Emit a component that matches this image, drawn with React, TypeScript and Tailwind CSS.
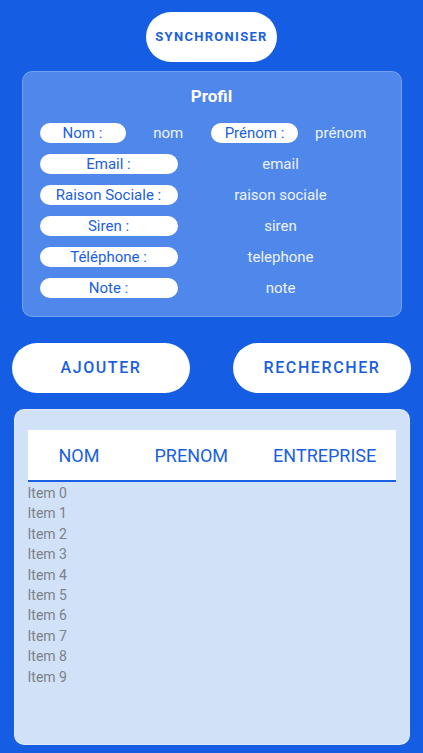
import React from "react";

const Pill = ({ label, w }: { label: string; w: string }) => (
  <div
    className={`${w} h-[20px] shrink-0 rounded-full bg-white flex items-center justify-center text-[15px] text-[#1a5fe0]`}
  >
    {label}
  </div>
);

const Value = ({ text }: { text: string }) => (
  <div className="flex-1 text-center text-[15px] text-white/90">{text}</div>
);

const rows = [
  { label: "Email :", value: "email" },
  { label: "Raison Sociale :", value: "raison sociale" },
  { label: "Siren :", value: "siren" },
  { label: "Téléphone :", value: "telephone" },
  { label: "Note :", value: "note" },
];

export default function App() {
  const items = Array.from({ length: 10 }, (_, i) => `Item ${i}`);

  return (
    <div
      className="w-[423px] h-[753px] bg-[#155de2] flex flex-col items-center pt-3 overflow-hidden"
      style={{ fontFamily: "Roboto, 'Noto Sans', sans-serif" }}
    >
      <button className="w-[131px] h-[50px] rounded-full bg-white text-[13px] font-bold tracking-[0.1em] text-[#1a5fe0]">
        SYNCHRONISER
      </button>

      {/* profil */}
      <div className="mt-[9px] w-[380px] h-[246px] rounded-[10px] bg-[#4f87ea] border border-white/20 px-[17px] pt-[12px]">
        <div className="text-center text-[17px] leading-[24px] font-bold text-white">Profil</div>
        <div className="mt-[15px] flex flex-col gap-[11px]">
          <div className="flex items-center h-[20px]">
            <Pill label="Nom :" w="w-[86px]" />
            <Value text="nom" />
            <Pill label="Prénom :" w="w-[87px]" />
            <Value text="prénom" />
          </div>
          {rows.map((r) => (
            <div key={r.label} className="flex items-center h-[20px]">
              <Pill label={r.label} w="w-[138px]" />
              <Value text={r.value} />
            </div>
          ))}
        </div>
      </div>

      <div className="mt-[26px] w-full px-3 flex justify-between">
        <button className="w-[178px] h-[50px] rounded-full bg-white text-[16px] font-medium tracking-[0.1em] text-[#1a5fe0]">
          AJOUTER
        </button>
        <button className="w-[178px] h-[50px] rounded-full bg-white text-[16px] font-medium tracking-[0.1em] text-[#1a5fe0]">
          RECHERCHER
        </button>
      </div>

      {/* liste */}
      <div className="mt-[16px] w-[396px] h-[336px] rounded-[10px] bg-[#d1e1f8] border border-white/30 px-[13px] pt-[20px]">
        <div className="h-[52px] bg-white border-b-2 border-[#1a5fe0] flex items-center text-[18px] text-[#1a5fe0]">
          <span className="ml-[31px]">NOM</span>
          <span className="ml-[55px]">PRENOM</span>
          <span className="ml-[45px]">ENTREPRISE</span>
        </div>
        <div className="pt-[1px] flex flex-col">
          {items.map((it) => (
            <div key={it} className="text-[14px] leading-[20.4px] text-[#7d8187]">
              {it}
            </div>
          ))}
        </div>
      </div>
    </div>
  );
}
